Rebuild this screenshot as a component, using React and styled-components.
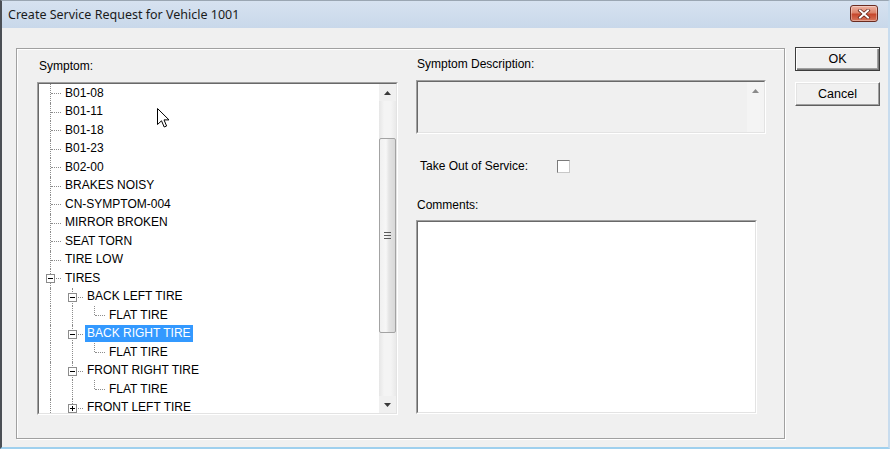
import styled, { createGlobalStyle } from 'styled-components';

const GlobalStyle = createGlobalStyle`
  html, body {
    margin: 0;
    padding: 0;
    background: #f0f0f0;
  }
  body {
    font-family: "Liberation Sans", Arial, sans-serif;
    font-size: 12px;
    color: #000;
  }
`;

const symptoms = [
  { label: 'B01-08', guides: ['tee'] },
  { label: 'B01-11', guides: ['tee'] },
  { label: 'B01-18', guides: ['tee'] },
  { label: 'B01-23', guides: ['tee'] },
  { label: 'B02-00', guides: ['tee'] },
  { label: 'BRAKES NOISY', guides: ['tee'] },
  { label: 'CN-SYMPTOM-004', guides: ['tee'] },
  { label: 'MIRROR BROKEN', guides: ['tee'] },
  { label: 'SEAT TORN', guides: ['tee'] },
  { label: 'TIRE LOW', guides: ['tee'] },
  { label: 'TIRES', guides: ['tee'], toggle: 'minus' },
  { label: 'BACK LEFT TIRE', guides: ['pass', 'tee'], toggle: 'minus' },
  { label: 'FLAT TIRE', guides: ['pass', 'pass', 'elbow'] },
  { label: 'BACK RIGHT TIRE', guides: ['pass', 'tee'], toggle: 'minus', selected: true },
  { label: 'FLAT TIRE', guides: ['pass', 'pass', 'elbow'] },
  { label: 'FRONT RIGHT TIRE', guides: ['pass', 'tee'], toggle: 'minus' },
  { label: 'FLAT TIRE', guides: ['pass', 'pass', 'elbow'] },
  { label: 'FRONT LEFT TIRE', guides: ['pass', 'elbow'], toggle: 'plus' },
];

const Dialog = () => {
  return (
    <Window>
      <GlobalStyle />
      <TitleBar>
        <Title>Create Service Request for Vehicle 1001</Title>
        <CloseButton aria-label="Close">
          <svg width="14" height="10" viewBox="0 0 14 10">
            <path d="M3 1.5 L11 8.5 M11 1.5 L3 8.5" stroke="#5a1e14" strokeWidth="3.4" strokeLinecap="square" />
            <path d="M3 1.5 L11 8.5 M11 1.5 L3 8.5" stroke="#fff" strokeWidth="2" strokeLinecap="square" />
          </svg>
        </CloseButton>
      </TitleBar>

      <Client>
        <GroupBox>
          <Column>
            <FieldLabel $indent={2}>Symptom:</FieldLabel>
            <Sunken $w={361} $h={333}>
              <SunkenInner>
                <TreeList>
                  {symptoms.map((item, i) => (
                    <TreeRow key={i}>
                      {item.guides.map((kind, g) => (
                        <Guide key={g} $kind={kind}>
                          {g === item.guides.length - 1 && item.toggle && (
                            <Toggle $kind={item.toggle} />
                          )}
                        </Guide>
                      ))}
                      <NodeLabel $selected={item.selected}>{item.label}</NodeLabel>
                    </TreeRow>
                  ))}
                </TreeList>
                <ScrollBar>
                  <ScrollArrow dir="up" />
                  <ScrollTrack>
                    <Thumb>
                      <Grip />
                    </Thumb>
                  </ScrollTrack>
                  <ScrollArrow dir="down" />
                </ScrollBar>
              </SunkenInner>
            </Sunken>
          </Column>

          <Column $shift={-2}>
            <FieldLabel $indent={1}>Symptom Description:</FieldLabel>
            <Sunken $w={350} $h={54} $disabled>
              <SunkenInner>
                <Filler />
                <ScrollBar $light>
                  <ScrollArrow dir="up" faint />
                  <ScrollTrack $empty />
                  <ScrollArrow dir="down" faint />
                </ScrollBar>
              </SunkenInner>
            </Sunken>

            <CheckRow>
              <CheckLabel>Take Out of Service:</CheckLabel>
              <CheckBox />
            </CheckRow>

            <FieldLabel $indent={1} $top={25}>Comments:</FieldLabel>
            <Sunken $w={341} $h={194}>
              <SunkenInner />
            </Sunken>
          </Column>
        </GroupBox>

        <ButtonColumn>
          <DialogButton $default>OK</DialogButton>
          <DialogButton>Cancel</DialogButton>
        </ButtonColumn>
      </Client>

      <Pointer width="13" height="21" viewBox="0 0 13 21">
        <path
          d="M0.5 0.5 L0.5 16.5 L4.5 12.8 L7.2 19 L9.6 18 L7 11.9 L12 11.9 Z"
          fill="#fff"
          stroke="#000"
          strokeWidth="1"
        />
      </Pointer>
    </Window>
  );
};

const ScrollArrow = ({ dir, faint }) => (
  <ArrowButton>
    <svg width="7" height="4" viewBox="0 0 7 4">
      <polygon
        points={dir === 'up' ? '3.5,0 7,4 0,4' : '0,0 7,0 3.5,4'}
        fill={faint ? '#8a8a8a' : '#3a3a3a'}
      />
    </svg>
  </ArrowButton>
);

const Toggle = ({ $kind }) => (
  <ToggleBox width="9" height="9" viewBox="0 0 9 9">
    <rect x="0.5" y="0.5" width="8" height="8" fill="#fff" stroke="#8c8c8c" />
    <line x1="2" y1="4.5" x2="7" y2="4.5" stroke="#000" />
    {$kind === 'plus' && <line x1="4.5" y1="2" x2="4.5" y2="7" stroke="#000" />}
  </ToggleBox>
);

const Window = styled.div`
  position: relative;
  width: 890px;
  height: 449px;
  box-sizing: border-box;
  display: flex;
  flex-direction: column;
  background: #f0f0f0;
  border-top: 1px solid #9aa6b2;
  border-left: 2px solid #4b4f55;
  border-right: 2px solid #c8dcee;
  border-bottom: 2px solid #9fd0ee;
  overflow: hidden;
`;

const TitleBar = styled.div`
  height: 27px;
  flex: none;
  display: flex;
  align-items: flex-start;
  justify-content: space-between;
  padding: 0 10px 0 6px;
  background: linear-gradient(#d6e2f0, #c9d8ea);
`;

const Title = styled.span`
  font-family: "Noto Sans", "Open Sans", sans-serif;
  font-size: 12.5px;
  line-height: 27px;
  color: #1b1b1b;
`;

const CloseButton = styled.div`
  margin-top: 4px;
  width: 28px;
  height: 17px;
  box-sizing: border-box;
  display: flex;
  align-items: center;
  justify-content: center;
  border: 1px solid #6a2b20;
  border-radius: 3px;
  background: linear-gradient(#eeb3a3, #dc846b 45%, #c6472c 55%, #d6765c);
  box-shadow: inset 0 0 0 1px rgba(255, 255, 255, 0.35);
`;

const Client = styled.div`
  flex: 1;
  display: flex;
  align-items: flex-start;
  padding: 0 8px 0 14px;
`;

const GroupBox = styled.div`
  margin-top: 20px;
  width: 769px;
  height: 391px;
  box-sizing: border-box;
  flex: none;
  display: flex;
  gap: 18px;
  padding: 10px 0 0 20px;
  border: 1px solid #a0a0a0;
  box-shadow: inset 1px 1px 0 #fff, 1px 1px 0 #fff;
`;

const Column = styled.div`
  display: flex;
  flex-direction: column;
  margin-top: ${(p) => p.$shift || 0}px;
`;

const FieldLabel = styled.div`
  font-size: 12px;
  line-height: 14px;
  height: 14px;
  padding-left: ${(p) => p.$indent || 0}px;
  margin-top: ${(p) => p.$top || 0}px;
  margin-bottom: ${(p) => (p.$top ? 8 : 10)}px;
  color: #000;
  &:first-child {
    margin-bottom: 9px;
  }
`;

const Sunken = styled.div`
  width: ${(p) => p.$w}px;
  height: ${(p) => p.$h}px;
  box-sizing: border-box;
  border: 1px solid;
  border-color: #a0a0a0 #ffffff #ffffff #a0a0a0;
  background: ${(p) => (p.$disabled ? '#f0f0f0' : '#fff')};
  flex: none;
`;

const SunkenInner = styled.div`
  height: 100%;
  box-sizing: border-box;
  border: 1px solid;
  border-color: #696969 #e3e3e3 #e3e3e3 #696969;
  display: flex;
  overflow: hidden;
`;

const Filler = styled.div`
  flex: 1;
`;

const TreeList = styled.div`
  flex: 1;
  overflow: hidden;
`;

const TreeRow = styled.div`
  height: 18.5px;
  display: flex;
  align-items: center;
  white-space: nowrap;
`;

const Guide = styled.span`
  position: relative;
  width: 22px;
  height: 100%;
  flex: none;

  &::before {
    content: '';
    position: absolute;
    left: 11px;
    top: 0;
    bottom: ${(p) => (p.$kind === 'elbow' ? '50%' : '0')};
    border-left: 1px dotted #8c8c8c;
  }

  &::after {
    content: '';
    display: ${(p) => (p.$kind === 'pass' ? 'none' : 'block')};
    position: absolute;
    left: 12px;
    right: 0;
    top: 50%;
    border-top: 1px dotted #8c8c8c;
  }
`;

const ToggleBox = styled.svg`
  position: absolute;
  left: 7px;
  top: calc(50% - 4px);
  z-index: 1;
`;

const NodeLabel = styled.span`
  margin-left: 2px;
  padding: 0 2px;
  height: ${(p) => (p.$selected ? 17 : 13)}px;
  line-height: ${(p) => (p.$selected ? 17 : 13)}px;
  font-size: 12px;
  color: ${(p) => (p.$selected ? '#fff' : '#000')};
  background: ${(p) => (p.$selected ? '#3399ff' : 'transparent')};
`;

const ScrollBar = styled.div`
  width: 17px;
  flex: none;
  display: flex;
  flex-direction: column;
  background: ${(p) => (p.$light ? '#f4f4f4' : '#f0f0f0')};
  box-sizing: border-box;
`;

const ArrowButton = styled.div`
  height: 17px;
  flex: none;
  display: flex;
  align-items: center;
  justify-content: center;
`;

const ScrollTrack = styled.div`
  flex: 1;
  padding-top: 37px;
  background: ${(p) =>
    p.$empty ? 'transparent' : 'linear-gradient(90deg, #e6e6e6, #f4f4f4 30%, #f4f4f4 70%, #e9e9e9)'};
`;

const Thumb = styled.div`
  height: 195px;
  box-sizing: border-box;
  border: 1px solid #a3a3a3;
  border-radius: 2px;
  background: linear-gradient(90deg, #f0f0f0, #f7f7f7 40%, #e4e4e4 60%, #d8d8d8);
  display: flex;
  align-items: center;
  justify-content: center;
`;

const Grip = styled.div`
  width: 7px;
  height: 5px;
  border-top: 1px solid #5a5a5a;
  border-bottom: 1px solid #5a5a5a;
  position: relative;

  &::after {
    content: '';
    position: absolute;
    left: 0;
    right: 0;
    top: 2px;
    border-top: 1px solid #5a5a5a;
  }
`;

const CheckRow = styled.div`
  display: flex;
  align-items: center;
  height: 14px;
  margin-top: 25px;
  padding-left: 4px;
`;

const CheckLabel = styled.span`
  width: 137px;
  font-size: 12px;
  line-height: 14px;
`;

const CheckBox = styled.span`
  width: 13px;
  height: 13px;
  box-sizing: border-box;
  background: #fff;
  border: 1px solid;
  border-color: #7a7a7a #c8c8c8 #c8c8c8 #7a7a7a;
`;

const ButtonColumn = styled.div`
  margin-top: 19px;
  margin-left: 10px;
  display: flex;
  flex-direction: column;
  gap: 11px;
`;

const DialogButton = styled.button`
  width: 85px;
  height: 24px;
  box-sizing: border-box;
  padding: 0;
  font-family: "Liberation Sans", Arial, sans-serif;
  font-size: 12.5px;
  color: #000;
  background: #f0f0f0;
  border: 1px solid;
  border-color: ${(p) => (p.$default ? '#3c3c3c' : '#ffffff #5f5f5f #5f5f5f #ffffff')};
  box-shadow: ${(p) =>
    p.$default
      ? 'inset 1px 1px 0 #fff, inset -1px -1px 0 #7a7a7a, inset -2px -2px 0 #a0a0a0'
      : 'inset -1px -1px 0 #a0a0a0, inset 1px 1px 0 #e3e3e3'};
`;

const Pointer = styled.svg`
  position: absolute;
  left: 155px;
  top: 107px;
  pointer-events: none;
`;

export default Dialog;
